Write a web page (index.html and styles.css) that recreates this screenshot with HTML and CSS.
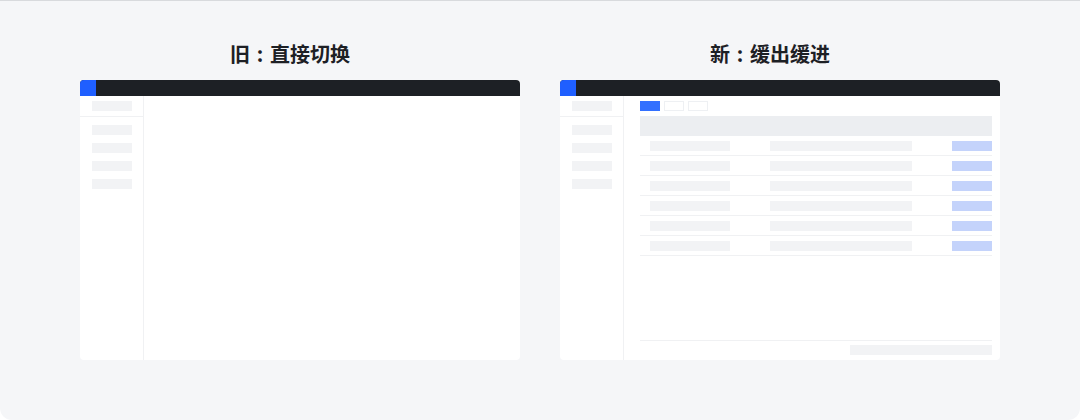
FILE: index.html
```html
<!DOCTYPE html>
<html lang="zh">
<head>
  <meta charset="UTF-8" />
  <meta name="viewport" content="width=device-width, initial-scale=1.0" />
  <title>切换对比</title>
  <link rel="stylesheet" href="styles.css">
</head>
<body>
  <div class="frame">
    <div class="compare">
      <section class="demo">
        <h2>旧<span class="sep">:</span>直接切换</h2>
        <div class="window">
          <div class="topbar"><span class="logo"></span></div>
          <div class="body">
            <aside class="side">
              <div class="side-head"><span class="bar"></span></div>
              <div class="side-list">
                <span class="bar"></span>
                <span class="bar"></span>
                <span class="bar"></span>
                <span class="bar"></span>
              </div>
            </aside>
            <main class="content"></main>
          </div>
        </div>
      </section>

      <section class="demo">
        <h2>新<span class="sep">:</span>缓出缓进</h2>
        <div class="window">
          <div class="topbar"><span class="logo"></span></div>
          <div class="body">
            <aside class="side">
              <div class="side-head"><span class="bar"></span></div>
              <div class="side-list">
                <span class="bar"></span>
                <span class="bar"></span>
                <span class="bar"></span>
                <span class="bar"></span>
              </div>
            </aside>
            <main class="content">
              <div class="tabs">
                <span class="tab active"></span>
                <span class="tab"></span>
                <span class="tab"></span>
              </div>
              <div class="table">
                <div class="thead"></div>
                <div class="row"><span class="c1"></span><span class="c2"></span><span class="c3"></span></div>
                <div class="row"><span class="c1"></span><span class="c2"></span><span class="c3"></span></div>
                <div class="row"><span class="c1"></span><span class="c2"></span><span class="c3"></span></div>
                <div class="row"><span class="c1"></span><span class="c2"></span><span class="c3"></span></div>
                <div class="row"><span class="c1"></span><span class="c2"></span><span class="c3"></span></div>
                <div class="row"><span class="c1"></span><span class="c2"></span><span class="c3"></span></div>
              </div>
              <div class="pager"><span class="pager-bar"></span></div>
            </main>
          </div>
        </div>
      </section>
    </div>
  </div>
</body>
</html>
```

FILE: styles.css
```css
* {
  box-sizing: border-box;
}

body {
  margin: 0;
  font-family: "Noto Sans CJK SC", "Noto Sans", sans-serif;
  background: #fff;
}

.frame {
  width: 1080px;
  height: 420px;
  background: #f5f6f8;
  border-top: 1px solid #d8dadd;
  border-radius: 0 0 12px 12px;
  padding: 39px 80px 0;
}

.compare {
  display: flex;
  gap: 40px;
}

.demo {
  width: 440px;
}

h2 {
  margin: 0 0 12px;
  padding-right: 20px;
  text-align: center;
  font-size: 20px;
  line-height: 28px;
  font-weight: 700;
  color: #1d2025;
}

/* colon centred in a full-width cell */
.sep {
  display: inline-block;
  width: 1em;
  text-align: center;
}

.window {
  height: 280px;
  background: #fff;
  border-radius: 4px;
  overflow: hidden;
  display: flex;
  flex-direction: column;
}

.topbar {
  height: 16px;
  background: #1d2025;
  flex-shrink: 0;
}

.logo {
  display: block;
  width: 16px;
  height: 16px;
  background: #1f5fff;
}

.body {
  flex: 1;
  display: flex;
}

.side {
  width: 64px;
  border-right: 1px solid #f0f1f3;
}

.bar {
  display: block;
  width: 40px;
  height: 10px;
  background: #f2f3f5;
}

.side-head {
  padding: 5px 11px 5px 12px;
  border-bottom: 1px solid #f0f1f3;
}

.side-list {
  padding: 8px 11px 0 12px;
  display: flex;
  flex-direction: column;
  gap: 8px;
}

.content {
  flex: 1;
  display: flex;
  flex-direction: column;
  padding: 5px 8px 5px 16px;
}

.tabs {
  display: flex;
  gap: 4px;
  height: 10px;
}

.tab {
  width: 20px;
  height: 10px;
  border: 1px solid #eef0f3;
}

.tab.active {
  background: #3370ff;
  border-color: #3370ff;
}

.table {
  margin-top: 5px;
}

.thead {
  height: 20px;
  background: #eceef1;
}

.row {
  height: 20px;
  display: flex;
  align-items: center;
  padding-left: 10px;
  border-bottom: 1px solid #f0f1f3;
}

.row span {
  display: block;
  height: 10px;
}

.c1 {
  width: 80px;
  background: #f2f3f5;
}

.c2 {
  width: 142px;
  margin-left: 40px;
  background: #f2f3f5;
}

.c3 {
  width: 40px;
  margin-left: auto;
  background: #c4d3fb;
}

.pager {
  margin-top: auto;
  border-top: 1px solid #f0f1f3;
  padding-top: 4px;
  display: flex;
  justify-content: flex-end;
}

.pager-bar {
  width: 142px;
  height: 10px;
  background: #f2f3f5;
}
```
